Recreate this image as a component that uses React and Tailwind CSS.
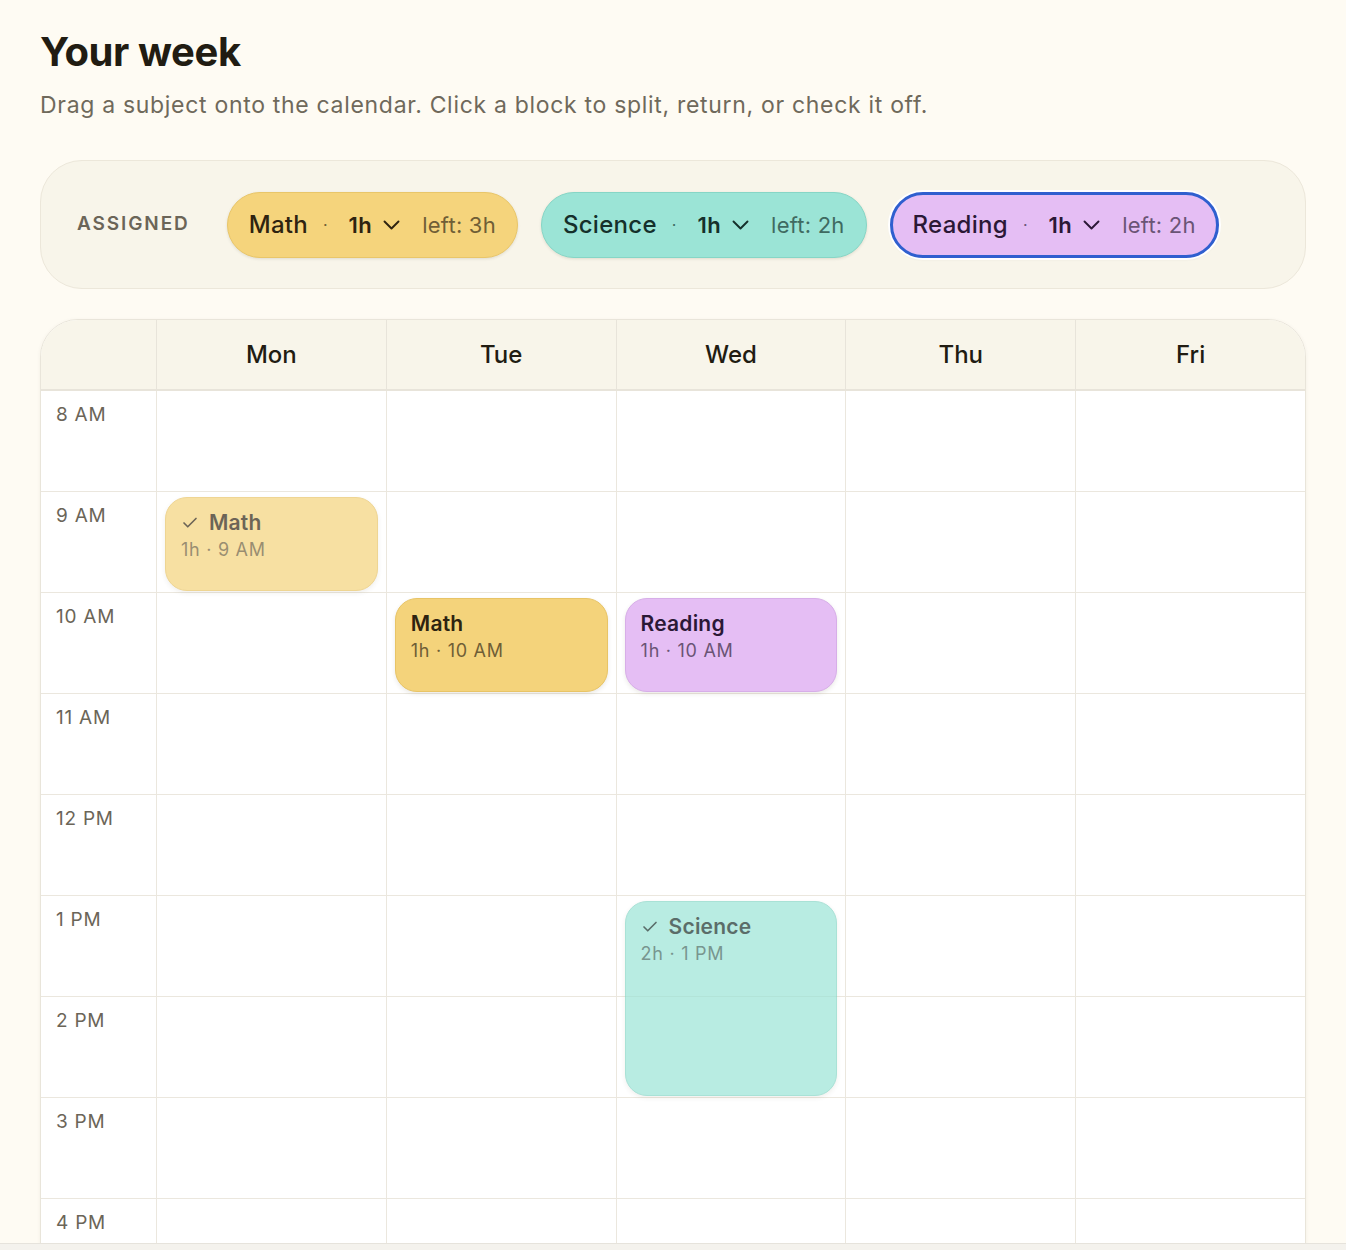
import React from 'react';
import { Check } from 'lucide-react';

const subjects = {
  Math: {
    chip: 'bg-[#f5d47c] border border-[#e9c669]',
    block: 'bg-[#f4d37b] border border-[#e8c466]',
    title: 'text-[#2e2310]',
    muted: 'text-[#6f5e36]',
    left: '3h',
  },
  Science: {
    chip: 'bg-[#9be4d6] border border-[#86d6c6]',
    block: 'bg-[#9be4d6] border border-[#86d6c6]',
    title: 'text-[#15302b]',
    muted: 'text-[#3f6a61]',
    left: '2h',
  },
  Reading: {
    chip: 'bg-[#e5bef4] border-[3px] border-[#2f5fcf] ring-2 ring-white',
    block: 'bg-[#e5bef4] border border-[#d7aee8]',
    title: 'text-[#2b1836]',
    muted: 'text-[#6a5475]',
    left: '2h',
  },
};

const days = ['Mon', 'Tue', 'Wed', 'Thu', 'Fri'];
const hours = ['8 AM', '9 AM', '10 AM', '11 AM', '12 PM', '1 PM', '2 PM', '3 PM', '4 PM'];
const ROW = 101;

const blocks = [
  { day: 0, hour: 1, span: 1, subject: 'Math', done: true },
  { day: 1, hour: 2, span: 1, subject: 'Math' },
  { day: 2, hour: 2, span: 1, subject: 'Reading' },
  { day: 2, hour: 5, span: 2, subject: 'Science', done: true },
];

function Chevron({ className }) {
  return (
    <svg className={className} width="17" height="10" viewBox="0 0 17 10" fill="none">
      <path d="M1.5 1.5 L8.5 8.5 L15.5 1.5" stroke="currentColor" strokeWidth="1.9" strokeLinecap="round" strokeLinejoin="round" />
    </svg>
  );
}

function Chip({ name, active }) {
  const s = subjects[name];
  return (
    <div
      className={`flex h-[66px] items-center rounded-full shadow-[0_1px_3px_rgba(60,50,20,0.12)] ${s.chip} ${
        active ? 'px-[20px]' : 'px-[21px]'
      }`}
    >
      <span className={`text-[24px] font-medium leading-none tracking-[0.012em] ${s.title}`}>{name}</span>
      <span className={`ml-[15px] text-[16px] ${s.muted}`}>·</span>
      <span className={`ml-[21px] text-[22px] font-semibold leading-none tracking-[0.02em] ${s.title}`}>1h</span>
      <Chevron className={`ml-[11px] ${s.title}`} />
      <span className={`ml-[22px] text-[22px] leading-none tracking-[0.01em] ${s.muted}`}>left: {s.left}</span>
    </div>
  );
}

function Block({ block }) {
  const s = subjects[block.subject];
  const label = hours[block.hour];
  return (
    <div
      className={`absolute left-2 right-2 z-10 rounded-[22px] px-[15px] pt-[12px] shadow-[0_2px_4px_rgba(60,50,20,0.10)] ${s.block} ${
        block.done ? 'opacity-70' : ''
      }`}
      style={{ top: block.hour * ROW + 5, height: block.span * ROW - 7 }}
    >
      <div className={`flex items-center gap-[10px] text-[21px] font-semibold leading-[26px] tracking-[0.01em] ${s.title}`}>
        {block.done && <Check size={18} strokeWidth={2.2} />}
        <span>{block.subject}</span>
      </div>
      <div className={`mt-[1px] text-[18px] leading-[26px] tracking-[0.04em] ${s.muted}`}>
        {block.span}h · {label}
      </div>
    </div>
  );
}

export default function App() {
  return (
    <div className="flex h-[1250px] flex-col overflow-hidden bg-[#fefbf3] font-['Inter',sans-serif]">
      <div className="min-h-0 flex-1 overflow-hidden px-10 pt-7">
        <h1 className="text-[40px] font-bold leading-[48px] tracking-[-0.01em] text-[#211c12]">Your week</h1>
        <p className="mt-[13px] text-[23px] leading-[32px] tracking-[0.03em] text-[#6f695b]">
          Drag a subject onto the calendar. Click a block to split, return, or check it off.
        </p>

        {/* Assigned subjects */}
        <div className="mt-[39px] flex h-[129px] items-center gap-[23px] rounded-[42px] border border-[#ece7da] bg-[#f8f5ea] px-9">
          <span className="mr-[14px] text-[19px] font-semibold tracking-[0.1em] text-[#6b6558]">ASSIGNED</span>
          <Chip name="Math" />
          <Chip name="Science" />
          <Chip name="Reading" active />
        </div>

        {/* Calendar */}
        <div className="mt-[30px] overflow-hidden rounded-t-[38px] border border-[#e9e5da] bg-white shadow-[0_1px_4px_rgba(60,50,20,0.06)]">
          <div className="grid h-[71px] grid-cols-[115px_repeat(5,1fr)] border-b-2 border-[#e8e4da] bg-[#f8f5ea]">
            <div />
            {days.map((d) => (
              <div
                key={d}
                className="flex items-center justify-center border-l border-[#e8e4da] text-[24px] font-medium text-[#211c12]"
              >
                {d}
              </div>
            ))}
          </div>

          <div className="grid grid-cols-[115px_repeat(5,1fr)]">
            <div>
              {hours.map((h) => (
                <div
                  key={h}
                  className="h-[101px] border-b border-[#ebe7de] pl-[15px] pt-[12px] text-[19px] leading-[24px] tracking-[0.04em] text-[#6b6558]"
                >
                  {h}
                </div>
              ))}
            </div>
            {days.map((d, di) => (
              <div key={d} className="relative border-l border-[#ebe7de]">
                {hours.map((h) => (
                  <div key={h} className="h-[101px] border-b border-[#ebe7de]" />
                ))}
                {blocks
                  .filter((b) => b.day === di)
                  .map((b, i) => (
                    <Block key={i} block={b} />
                  ))}
              </div>
            ))}
          </div>
        </div>
      </div>
      <div className="h-[7px] shrink-0 border-t border-[#e6e3dc] bg-[#f4f2ed]" />
    </div>
  );
}
